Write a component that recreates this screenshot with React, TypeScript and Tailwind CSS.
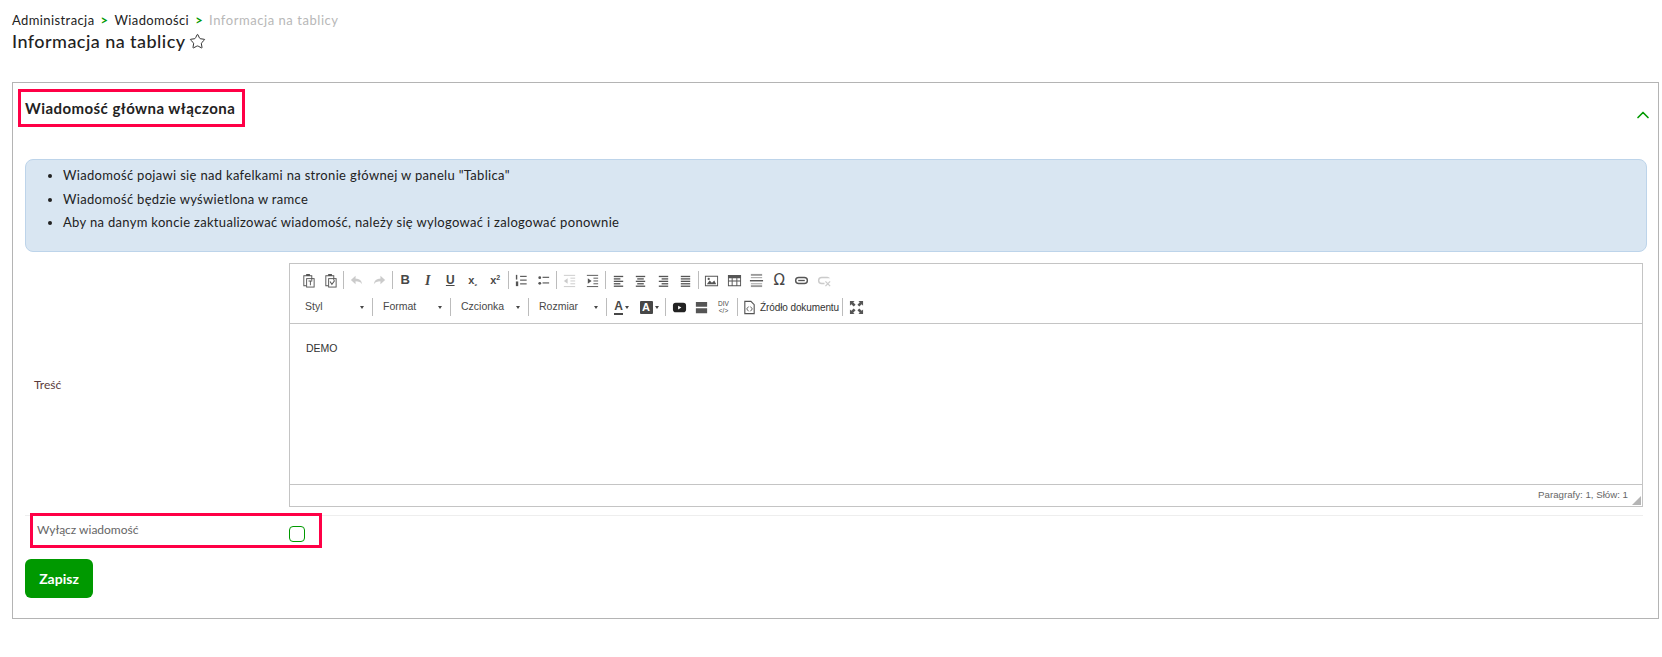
import React from "react";
import { Star, ChevronUp } from "lucide-react";

const ic = "w-[15px] h-[15px] text-[#555555]";
const Btn = ({ children, w = "w-[22.5px]" }: { children: React.ReactNode; w?: string }) => (
  <div className={`${w} h-[22px] flex items-center justify-center shrink-0`}>{children}</div>
);
const Sep = () => <div className="w-[1px] h-[18px] bg-[#bcbcbc] mx-[1.25px] shrink-0" />;
const Sep2 = () => <div className="w-[1px] h-[18px] bg-[#bcbcbc] mx-[2px] shrink-0" />;
const Svg = ({ children, dim }: { children: React.ReactNode; dim?: boolean }) => (
  <svg viewBox="0 0 16 16" className={`${ic} ${dim ? "opacity-30" : ""}`} fill="currentColor">{children}</svg>
);
const Lines = ({ rows }: { rows: [number, number][] }) => (
  <Svg>{rows.map(([x, w], i) => <rect key={i} x={x} y={3 + i * 2.6} width={w} height="1.4" />)}</Svg>
);
const Combo = ({ label, w }: { label: string; w: string }) => (
  <div className={`${w} h-[22px] flex items-center justify-between pl-[8px] pr-[6px] shrink-0 text-[10.5px] text-[#484848]`}>
    <span>{label}</span>
    <span className="w-0 h-0 border-x-[2.5px] border-x-transparent border-t-[3px] border-t-[#474747]" />
  </div>
);
const Arrow = () => <span className="ml-[2px] w-0 h-0 border-x-[2.5px] border-x-transparent border-t-[3px] border-t-[#474747]" />;

const Paste = ({ word }: { word?: boolean }) => (
  <Svg>
    <path fillRule="evenodd" d="M6 1h4v1.5h2.5V8h-1V3.5H4V13h2v1H3V2.5h3z" transform="translate(-.5 0)" />
    <rect x="6" y="6" width="8" height="9" fill="none" stroke="currentColor" />
    {word ? <path d="M7.5 9l2 3 3-4" fill="none" stroke="currentColor" strokeWidth="1.1" /> : <path d="M8 8h4v1H10.5v4h-1V9H8z" />}
  </Svg>
);

function Toolbar() {
  return (
    <div className="h-[60px] border-b border-[#c4c4c4] pl-[7px] pt-[5px] font-['Liberation_Sans',sans-serif]">
      <div className="flex items-center h-[22px]">
        <Btn><Paste /></Btn>
        <Btn><Paste word /></Btn>
        <Sep />
        <Btn><Svg dim><path d="M7 3v3.2c4 0 6.5 1.8 7 5.8-1.5-2.4-3.5-3.2-7-3.2V12L2 7.500z" /></Svg></Btn>
        <Btn><Svg dim><path d="M9 3v3.2C5 6.200 2.500 8 2 12c1.500-2.400 3.500-3.200 7-3.200V12l5-4.500z" /></Svg></Btn>
        <Sep />
        <Btn><span className="font-bold text-[13px] text-[#474747]">B</span></Btn>
        <Btn><span className="italic font-bold font-['Liberation_Serif',serif] text-[14px] text-[#474747]">I</span></Btn>
        <Btn><span className="underline font-bold text-[12px] text-[#474747]">U</span></Btn>
        <Btn><span className="font-bold text-[11px] text-[#474747]">x<sub className="text-[7px]">₂</sub></span></Btn>
        <Btn><span className="font-bold text-[11px] text-[#474747]">x<sup className="text-[7px]">2</sup></span></Btn>
        <Sep />
        <Btn><Svg><rect x="2" y="2" width="1.500" height="5" /><rect x="2" y="9" width="2.500" height="5" /><rect x="6.500" y="3" width="7" height="1.200" /><rect x="6.500" y="7" width="7" height="1.200" /><rect x="6.500" y="11" width="7" height="1.200" /></Svg></Btn>
        <Btn><Svg><circle cx="4" cy="5" r="1.500" /><circle cx="4" cy="11" r="1.500" /><rect x="7" y="4" width="7" height="1.200" /><rect x="7" y="10" width="7" height="1.200" /></Svg></Btn>
        <Sep />
        <Btn><Svg dim><rect x="2" y="2" width="12" height="1" /><rect x="9" y="5" width="5" height="1" /><rect x="9" y="8" width="5" height="1" /><rect x="9" y="11" width="5" height="1" /><rect x="2" y="14" width="12" height="1" /><path d="M2 8.500l4-3v6z" /></Svg></Btn>
        <Btn><Svg><rect x="2" y="2" width="12" height="1" /><rect x="9" y="5" width="5" height="1" /><rect x="9" y="8" width="5" height="1" /><rect x="9" y="11" width="5" height="1" /><rect x="2" y="14" width="12" height="1" /><path d="M7 8.500l-4-3v6z" /></Svg></Btn>
        <Sep />
        <Btn><Lines rows={[[3, 10], [3, 7], [3, 10], [3, 7], [3, 10]]} /></Btn>
        <Btn><Lines rows={[[3, 10], [4.500, 7], [3, 10], [4.500, 7], [3, 10]]} /></Btn>
        <Btn><Lines rows={[[3, 10], [6, 7], [3, 10], [6, 7], [3, 10]]} /></Btn>
        <Btn><Lines rows={[[3, 10], [3, 10], [3, 10], [3, 10], [3, 10]]} /></Btn>
        <Sep />
        <Btn><Svg><path fillRule="evenodd" d="M1 3h14v11H1zm1 1v9h12V4z" /><path d="M3 12l3-4 2.500 2.500L11 8l2 4z" /><circle cx="5" cy="6.300" r="1.200" /></Svg></Btn>
        <Btn><Svg><path fillRule="evenodd" d="M1 2h14v12H1zm1 3.500V8h3V5.500zm4 0V8h4V5.500zm5 0V8h3V5.500zM2 9v4h3V9zm4 0v4h4V9zm5 0v4h3V9z" /></Svg></Btn>
        <Btn><Svg><rect x="2" y="1" width="12" height="2" opacity=".6" /><rect x="2" y="4.500" width="12" height="1" opacity=".6" /><rect x="1" y="7.500" width="14" height="1.500" /><rect x="2" y="11" width="12" height="1" opacity=".6" /><rect x="2" y="13" width="12" height="2" opacity=".6" /></Svg></Btn>
        <Btn><span className="text-[15px] leading-none text-[#474747] font-['DejaVu_Sans',sans-serif]">Ω</span></Btn>
        <Btn><Svg><path fillRule="evenodd" d="M5 4h6a4 4 0 010 8H5a4 4 0 010-8zm0 1.500a2.500 2.500 0 000 5h6a2.500 2.500 0 000-5z" /><rect x="4.500" y="7.300" width="7" height="1.400" /></Svg></Btn>
        <Btn><Svg dim><path fillRule="evenodd" d="M5 4h6a4 4 0 013 1.500H5a2.500 2.500 0 000 5h3V12H5a4 4 0 010-8z" /><path d="M9 9l5 5M14 9l-5 5" stroke="currentColor" strokeWidth="1.300" /></Svg></Btn>
      </div>
      <div className="flex items-center h-[22px] mt-[5px]">
        <Combo label="Styl" w="w-[73px]" />
        <Sep2 />
        <Combo label="Format" w="w-[73px]" />
        <Sep2 />
        <Combo label="Czcionka" w="w-[73px]" />
        <Sep2 />
        <Combo label="Rozmiar" w="w-[73px]" />
        <Sep2 />
        <div className="w-[25px] h-[22px] flex items-center justify-center">
          <span className="text-[12px] font-bold leading-[13px] border-b-2 border-[#474747] text-[#474747]">A</span><Arrow />
        </div>
        <div className="w-[28px] h-[22px] ml-[1px] flex items-center justify-center">
          <span className="w-[13px] h-[13px] rounded-[1px] bg-[#474747] text-white text-[11px] font-bold leading-[13px] text-center">A</span><Arrow />
        </div>
        <Sep2 />
        <Btn w="w-[22px]"><svg viewBox="0 0 16 16" className="w-[15px] h-[15px]"><rect x="1" y="3" width="14" height="10" rx="3" fill="#222" /><path d="M6.500 6v4l3.500-2z" fill="#fff" /></svg></Btn>
        <Btn w="w-[22px]"><Svg><path fillRule="evenodd" d="M2 2h12v5.300H2zM2 8.700h12V14H2z" /></Svg></Btn>
        <Btn w="w-[23px]"><span className="text-[6.5px] leading-[7px] text-[#474747] text-center">DIV<br />&lt;/&gt;</span></Btn>
        <Sep2 />
        <div className="flex items-center h-[22px] pl-[2px] pr-[1px] text-[10px] text-[#333] tracking-[-0.1px]">
          <Svg><path fill="none" stroke="currentColor" strokeWidth="1.200" d="M3 1.500h6.500L13 5v9.500H3z" /><path fill="none" stroke="currentColor" d="M7 7L5 9.500 7 12M9 7l2 2.500L9 12" /></Svg>
          <span className="ml-[3px]">Źródło dokumentu</span>
        </div>
        <Sep2 />
        <Btn w="w-[22px]"><Svg><path d="M1 1h5L4.500 2.500 7 5 5 7 2.500 4.500 1 6zM15 1v5l-1.500-1.500L11 7 9 5l2.500-2.500L10 1zM1 15v-5l1.500 1.500L5 9l2 2-2.500 2.500L6 15zM15 15h-5l1.500-1.500L9 11l2-2 2.500 2.500L15 10z" /></Svg></Btn>
      </div>
    </div>
  );
}

export default function App() {
  return (
    <div className="w-[1662px] h-[657px] bg-white overflow-hidden pl-[12px] pr-[3px] pt-[13px] font-['Lato',sans-serif] text-[#222]">
      <div className="flex items-center h-[16px] text-[13px] tracking-[0.4px]">
        <span>Administracja</span>
        <span className="mx-[6px] text-[#009900] font-bold">&gt;</span>
        <span>Wiadomości</span>
        <span className="mx-[6px] text-[#009900] font-bold">&gt;</span>
        <span className="text-[#b8b8b8] tracking-[0.55px]">Informacja na tablicy</span>
      </div>
      <div className="flex items-center h-[24px] text-[18px] tracking-[0.45px] font-medium">
        <span>Informacja na tablicy</span>
        <Star className="w-[17px] h-[17px] ml-[3px]" strokeWidth={1.3} />
      </div>
      <section className="mt-[29px] h-[537px] border border-[#b4b4b4] pt-[6px] pl-[5px] pr-[5px]">
        <div className="flex items-center justify-between">
          <h1 className="h-[38px] w-[227px] border-[3px] border-[#ff0046] flex items-center pl-[4px] text-[15px] font-bold text-[#222] tracking-[0.45px] whitespace-nowrap">
            Wiadomość główna włączona
          </h1>
          <ChevronUp className="w-[20px] h-[20px] text-[#009900] mt-[14px]" strokeWidth={2} />
        </div>
        <div className="ml-[7px] mr-[6px] mt-[32px] h-[93px] rounded-[8px] bg-[#d9e6f2] border border-[#bdd4ea] text-[13px] tracking-[0.32px] pt-[4px] pl-[37px]">
          <ul className="list-disc leading-[23.500px]">
            <li>Wiadomość pojawi się nad kafelkami na stronie głównej w panelu "Tablica"</li>
            <li>Wiadomość będzie wyświetlona w ramce</li>
            <li>Aby na danym koncie zaktualizować wiadomość, należy się wylogować i zalogować ponownie</li>
          </ul>
        </div>
        <div className="ml-[7px] mr-[10px] mt-[11px] flex items-center border-b border-[#eeeeee] pb-[8px]">
          <label className="w-[264px] pl-[9px] shrink-0 text-[12px] text-[#5c3b3b]">Treść</label>
          <div className="flex-1 h-[244px] border border-[#c4c4c4] flex flex-col">
            <Toolbar />
            <div className="flex-1 pl-[16px] pt-[17px] font-['Liberation_Sans',sans-serif] text-[10.500px] text-[#333]">DEMO</div>
            <div className="h-[22px] border-t border-[#c4c4c4] flex items-center justify-end pr-[14px] relative font-['Liberation_Sans',sans-serif] text-[9.700px] text-[#666]">
              Paragrafy: 1, Słów: 1
              <span className="absolute right-[1px] bottom-[1px] w-0 h-0 border-l-[9px] border-l-transparent border-b-[9px] border-b-[#b5b5b5]" />
            </div>
          </div>
        </div>
        <div className="ml-[12px] -mt-[3px] w-[292px] h-[35px] border-[3px] border-[#ff0046] relative flex items-start bg-white">
          <span className="pl-[4px] pt-[5px] text-[12px] font-normal text-[#666]">Wyłącz wiadomość</span>
          <span className="absolute left-[256px] top-[10px] w-[16px] h-[16px] rounded-[4px] border border-[#009900] bg-white" />
        </div>
        <button className="ml-[7px] mt-[11px] block w-[68px] h-[39px] rounded-[6px] bg-[#009900] text-white text-[14px] font-bold">Zapisz</button>
      </section>
    </div>
  );
}
